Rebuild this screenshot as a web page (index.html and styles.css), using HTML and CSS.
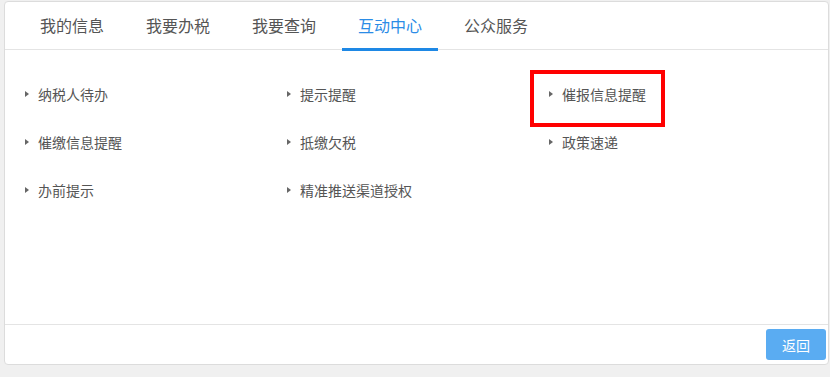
FILE: index.html
```html
<!DOCTYPE html>
<html lang="zh-CN">
<head>
<meta charset="utf-8">
<title>互动中心</title>
<link rel="stylesheet" href="styles.css">
</head>
<body>
<div class="panel">
  <div class="tabs">
    <div class="tab">我的信息</div>
    <div class="tab">我要办税</div>
    <div class="tab">我要查询</div>
    <div class="tab active">互动中心</div>
    <div class="tab">公众服务</div>
  </div>
  <div class="content">
    <ul class="list">
      <li class="item"><span class="arrow"></span>纳税人待办</li>
      <li class="item"><span class="arrow"></span>提示提醒</li>
      <li class="item highlighted"><span class="arrow"></span>催报信息提醒<span class="mark"></span></li>
      <li class="item"><span class="arrow"></span>催缴信息提醒</li>
      <li class="item"><span class="arrow"></span>抵缴欠税</li>
      <li class="item"><span class="arrow"></span>政策速递</li>
      <li class="item"><span class="arrow"></span>办前提示</li>
      <li class="item"><span class="arrow"></span>精准推送渠道授权</li>
    </ul>
  </div>
  <div class="footer">
    <button class="btn">返回</button>
  </div>
</div>
</body>
</html>
```
FILE: styles.css
```css
html, body {
  margin: 0;
  padding: 0;
  background: #f0f0f0;
  font-family: "Noto Sans CJK SC", "Noto Sans", sans-serif;
}
.panel {
  margin: 1px 1px 0 4px;
  height: 362px;
  background: #fff;
  border: 1px solid #dcdcdc;
  border-radius: 4px;
  display: flex;
  flex-direction: column;
  box-sizing: content-box;
}
.tabs {
  display: flex;
  height: 47px;
  border-bottom: 1px solid #e4e4e4;
  padding-left: 19px;
  gap: 10px;
}
.tab {
  box-sizing: border-box;
  width: 96px;
  text-align: center;
  font-size: 16px;
  color: #555;
  line-height: 47px;
  height: 49px;
}
.tab.active {
  color: #2b8ce6;
  border-bottom: 3px solid #1e88e5;
}
.content {
  flex: 1;
}
.list {
  list-style: none;
  margin: 0;
  padding: 20px 0 0 19px;
  display: grid;
  grid-template-columns: 262px 262px 262px;
  grid-auto-rows: 48px;
}
.item {
  position: relative;
  display: flex;
  align-items: center;
  height: 48px;
  font-size: 14px;
  color: #555;
}
.arrow {
  width: 0;
  height: 0;
  border-left: 4px solid #666;
  border-top: 3.5px solid transparent;
  border-bottom: 3.5px solid transparent;
  margin-right: 9px;
  margin-left: 1px;
}
.mark {
  position: absolute;
  left: -18px;
  top: 0;
  width: 135px;
  height: 57px;
  box-sizing: border-box;
  border: 4px solid #f00;
}
.footer {
  height: 40px;
  border-top: 1px solid #e4e4e4;
  display: flex;
  justify-content: flex-end;
  align-items: flex-start;
  padding: 4px 2px 0 0;
  box-sizing: border-box;
}
.btn {
  width: 60px;
  height: 31px;
  border: none;
  border-radius: 3px;
  background: #5aacf2;
  color: #fff;
  font-family: "Noto Sans CJK SC", sans-serif;
  font-size: 14px;
  padding: 0;
}
```
